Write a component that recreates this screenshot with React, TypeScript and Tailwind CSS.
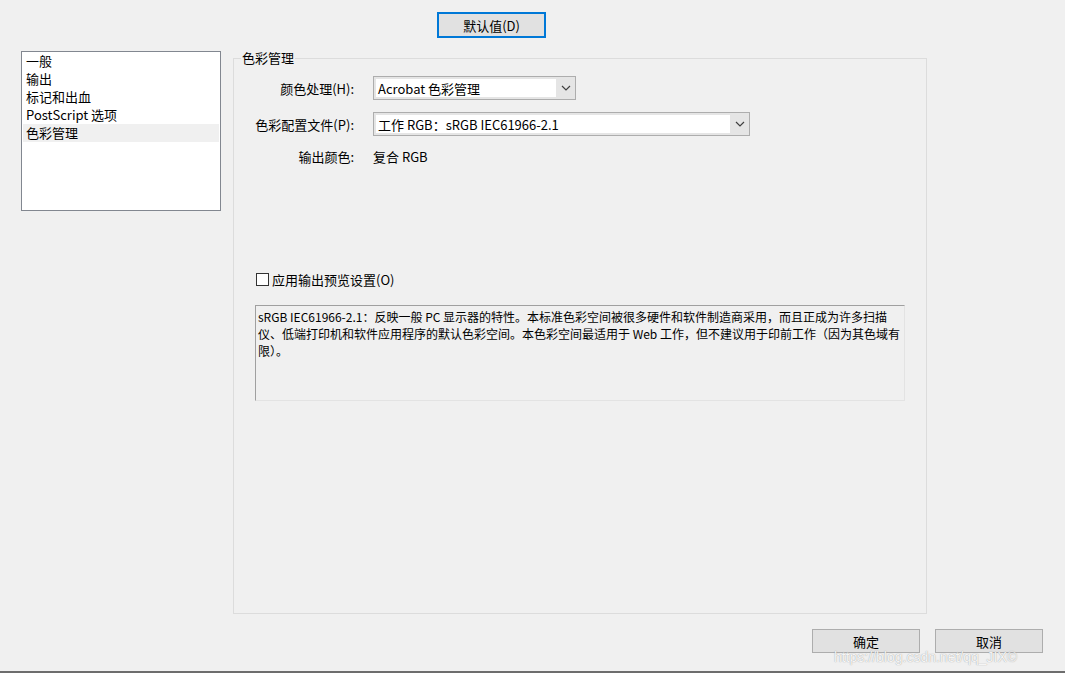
import React from "react";

const font = { fontFamily: '"Noto Sans CJK SC", "Noto Sans", sans-serif' };

function Chevron() {
  return (
    <svg width="10" height="6" viewBox="0 0 10 6" className="block">
      <path d="M1 1 L5 5 L9 1" fill="none" stroke="#404040" strokeWidth="1.2" />
    </svg>
  );
}

function Select({ width, text }: { width: number; text: string }) {
  return (
    <div
      className="h-[24px] border border-[#adadad] bg-[#e5e5e5] flex items-stretch p-[2px] pr-0"
      style={{ width }}
    >
      <div className="flex-1 bg-white flex items-center pl-[2px] text-[13px] text-black leading-none whitespace-nowrap">
        {text}
      </div>
      <div className="w-[19px] flex items-center justify-center">
        <Chevron />
      </div>
    </div>
  );
}

export default function App() {
  const items = ["一般", "输出", "标记和出血", "PostScript 选项", "色彩管理"];
  return (
    <div
      className="relative w-[1065px] h-[673px] bg-[#f0f0f0] text-black overflow-hidden flex flex-col"
      style={font}
    >
      <div className="pt-[12px] pl-[437px]">
        <button className="w-[109px] h-[26px] border-2 border-[#0078d7] bg-[#e1e1e1] text-[13px] leading-none flex items-center justify-center">
          默认值(D)
        </button>
      </div>

      <div className="flex mt-[13px]">
        <div className="ml-[21px] w-[200px] h-[160px] border border-[#828790] bg-white px-[1px]">
          {items.map((it, i) => (
            <div
              key={it}
              className={`h-[18px] pl-[3px] text-[13px] leading-[18px] whitespace-nowrap ${
                i === 4 ? "bg-[#f0f0f0]" : ""
              }`}
            >
              {it}
            </div>
          ))}
        </div>

        <div className="ml-[12px] mt-[7px] w-[694px] h-[556px] border border-[#dcdcdc] flex flex-col">
          <div className="-mt-[10px] ml-[7px] h-[18px] flex">
            <span className="bg-[#f0f0f0] px-[1px] text-[13px] leading-[18px]">色彩管理</span>
          </div>

          <div className="mt-[9px] grid grid-cols-[120px_auto] gap-x-[19px] items-center">
            <div className="text-right text-[13px] leading-none">颜色处理(H):</div>
            <Select width={203} text="Acrobat 色彩管理" />
          </div>
          <div className="mt-[12px] grid grid-cols-[120px_auto] gap-x-[19px] items-center">
            <div className="text-right text-[13px] leading-none">色彩配置文件(P):</div>
            <Select width={377} text="工作 RGB：sRGB IEC61966-2.1" />
          </div>
          <div className="mt-[12px] grid grid-cols-[120px_auto] gap-x-[19px] items-center h-[16px]">
            <div className="text-right text-[13px] leading-none">输出颜色:</div>
            <div className="text-[13px] leading-none">复合 RGB</div>
          </div>

          <div className="mt-[107px] ml-[22px] flex items-center gap-[3px] h-[16px]">
            <div className="w-[13px] h-[13px] border border-[#333333] bg-white" />
            <span className="text-[13px] leading-none">应用输出预览设置(O)</span>
          </div>

          <div className="mt-[18px] ml-[21px] w-[650px] h-[96px] border-t border-l border-[#a0a0a0] border-r border-b border-r-[#e3e3e3] border-b-[#e3e3e3] bg-[#f0f0f0] pl-[2px] pt-[2px] text-[12px] leading-[17px] whitespace-nowrap">
            sRGB IEC61966-2.1：反映一般 PC 显示器的特性。本标准色彩空间被很多硬件和软件制造商采用，而且正成为许多扫描
            <br />
            仪、低端打印机和软件应用程序的默认色彩空间。本色彩空间最适用于 Web 工作，但不建议用于印前工作（因为其色域有
            <br />
            限）。
          </div>
        </div>
      </div>

      <div className="mt-[15px] flex gap-[15px] pl-[812px]">
        <button className="w-[108px] h-[24px] border border-[#adadad] bg-[#e1e1e1] text-[13px] leading-none flex items-center justify-center">
          确定
        </button>
        <button className="w-[108px] h-[24px] border border-[#adadad] bg-[#e1e1e1] text-[13px] leading-none flex items-center justify-center">
          取消
        </button>
      </div>

      <div className="mt-auto h-[2px] bg-[#6d6d6d]" />

      <div
        className="absolute left-[834px] top-[650px] text-[14px] leading-none text-white/90 whitespace-nowrap"
        style={{ fontFamily: '"Liberation Sans", sans-serif', textShadow: "0 0 1px rgba(110,110,110,0.8)" }}
      >
        https://blog.csdn.net/qq_JIX©
      </div>
    </div>
  );
}
